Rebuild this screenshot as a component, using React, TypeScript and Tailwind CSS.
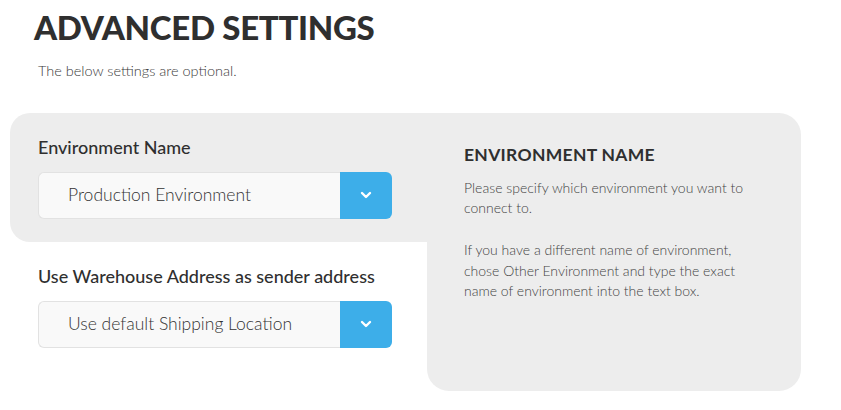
function Chevron() {
  return (
    <svg width="12" height="8" viewBox="0 0 12 8" fill="none">
      <path d="M2 2l4 4 4-4" stroke="white" strokeWidth="2.4" strokeLinecap="round" strokeLinejoin="round" />
    </svg>
  );
}

function Select({ value }: { value: string }) {
  return (
    <div className="flex h-[47px] w-[354px]">
      <div className="flex flex-1 items-center rounded-l-[6px] border border-r-0 border-[#e2e2e2] bg-[#f9f9f9] pl-[29px] text-[17.5px] font-light text-[#333]">
        {value}
      </div>
      <div className="flex w-[52px] items-center justify-center rounded-r-[6px] bg-[#3daee9]">
        <Chevron />
      </div>
    </div>
  );
}

export default function App() {
  return (
    <div className="h-[410px] w-[841px] bg-white font-['Lato',sans-serif] text-[#333]">
      {/* Header */}
      <div className="pl-[34px] pt-[6px]">
        <h1 className="text-[33px] font-black leading-[42px] tracking-[-0.3px] text-[#2f2f2f]">ADVANCED SETTINGS</h1>
        <p className="mt-[12px] pl-[4px] text-[14.5px] font-light text-[#3a3a3a]">The below settings are optional.</p>
      </div>

      <div className="ml-[10px] mt-[31px] flex">
        {/* Left column */}
        <div className="w-[417px]">
          <div className="rounded-l-[20px] bg-[#ededed] pb-[23px] pl-[28px] pt-[22px]">
            <label className="block text-[18px] font-medium leading-[24px] text-[#2f2f2f]">Environment Name</label>
            <div className="mt-[13px]">
              <Select value="Production Environment" />
            </div>
          </div>
          <div className="pl-[28px] pt-[22px]">
            <label className="block text-[18px] font-medium leading-[24px] text-[#2f2f2f]">Use Warehouse Address as sender address</label>
            <div className="mt-[13px]">
              <Select value="Use default Shipping Location" />
            </div>
          </div>
        </div>

        {/* Help panel */}
        <div className="h-[278px] w-[374px] rounded-r-[22px] rounded-bl-[22px] bg-[#ededed] pl-[37px] pt-[31px]">
          <h2 className="text-[17.5px] font-bold leading-[22px] tracking-[0.3px] text-[#2f2f2f]">ENVIRONMENT NAME</h2>
          <div className="w-[295px] text-[14px] font-light leading-[20.5px] text-[#444]">
            <p className="mt-[12px]">Please specify which environment you want to connect to.</p>
            <p className="mt-[21.5px]">
              If you have a different name of environment, chose Other Environment and type the exact name of environment into the text box.
            </p>
          </div>
        </div>
      </div>
    </div>
  );
}
